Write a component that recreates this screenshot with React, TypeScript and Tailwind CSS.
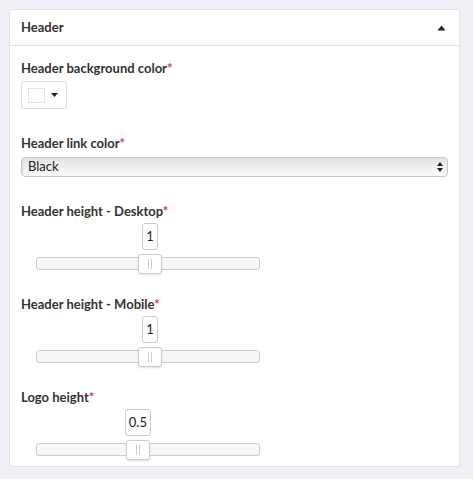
import React from 'react';

const font = { fontFamily: '"Lato", "Liberation Sans", sans-serif' };

const Label = ({ text }: { text: string }) => (
  <div className="text-[13px] font-bold text-[#333] leading-[16px]">
    {text}
    <span className="text-[#e8304f]">*</span>
  </div>
);

const Slider = ({ value, pct, boxW }: { value: string; pct: number; boxW: number }) => (
  <div className="relative ml-[15px] mt-[4px] h-[51px] w-[224px]">
    <div
      className="absolute top-0 flex h-[27px] items-center justify-center rounded-[3px] border border-[#ccc] bg-white text-[13px] text-[#222]"
      style={{ left: `calc(${pct}% - ${boxW / 2}px)`, width: boxW }}
    >
      {value}
    </div>
    <div className="absolute left-0 right-0 top-[34px] h-[13px] rounded-[3px] border border-[#ccc] bg-[#f7f7f7]" />
    <div
      className="absolute top-[31px] flex h-[20px] w-[24px] items-center justify-center rounded-[3px] border border-[#ccc] bg-white shadow-[0_1px_2px_rgba(0,0,0,0.12)]"
      style={{ left: `calc(${pct}% - 12px)` }}
    >
      <div className="flex gap-[2px]">
        <div className="h-[10px] w-px bg-[#ccc]" />
        <div className="h-[10px] w-px bg-[#ccc]" />
      </div>
    </div>
  </div>
);

export default function App() {
  return (
    <div className="min-h-[479px] bg-[#eff0f5] p-[9px] pr-[13px]" style={font}>
      <div className="rounded-[3px] border border-[#e3e4e8] bg-white">
        <div className="flex h-[36px] items-center justify-between border-b border-[#e3e4e8] pl-[11px] pr-[13px]">
          <span className="text-[13px] font-bold text-[#333]">Header</span>
          <svg width="9" height="6" viewBox="0 0 9 6">
            <path d="M4.5 0.5 L8.5 5.5 L0.5 5.5 Z" fill="#222" />
          </svg>
        </div>
        <div className="px-[11px] pb-[6px] pt-[14px]">
          <Label text="Header background color" />
          <div className="mt-[5px] flex h-[28px] w-[46px] items-center gap-[6px] rounded-[3px] border border-[#ddd] bg-white pl-[6px]">
            <div className="h-[15px] w-[17px] border border-[#e3e3e3] bg-white" />
            <svg width="7" height="4" viewBox="0 0 7 4">
              <path d="M0 0 L7 0 L3.5 4 Z" fill="#222" />
            </svg>
          </div>

          <div className="mt-[26px]">
            <Label text="Header link color" />
          </div>
          <div className="mt-[6px] flex h-[20px] items-center justify-between rounded-[4px] border border-[#c9c9c9] bg-gradient-to-b from-[#e4e4e4] to-[#fafafa] pl-[6px] pr-[4px] shadow-[inset_1px_0_1px_rgba(0,0,0,0.08)]">
            <span className="text-[13px] text-[#222]">Black</span>
            <svg width="6" height="10" viewBox="0 0 6 10">
              <path d="M3 0 L6 4 L0 4 Z M3 10 L6 6 L0 6 Z" fill="#222" />
            </svg>
          </div>

          <div className="mt-[26px]">
            <Label text="Header height - Desktop" />
          </div>
          <Slider value="1" pct={50.9} boxW={16} />

          <div className="mt-[22px]">
            <Label text="Header height - Mobile" />
          </div>
          <Slider value="1" pct={50.9} boxW={16} />

          <div className="mt-[22px]">
            <Label text="Logo height" />
          </div>
          <Slider value="0.5" pct={45.5} boxW={26} />
        </div>
      </div>
    </div>
  );
}
